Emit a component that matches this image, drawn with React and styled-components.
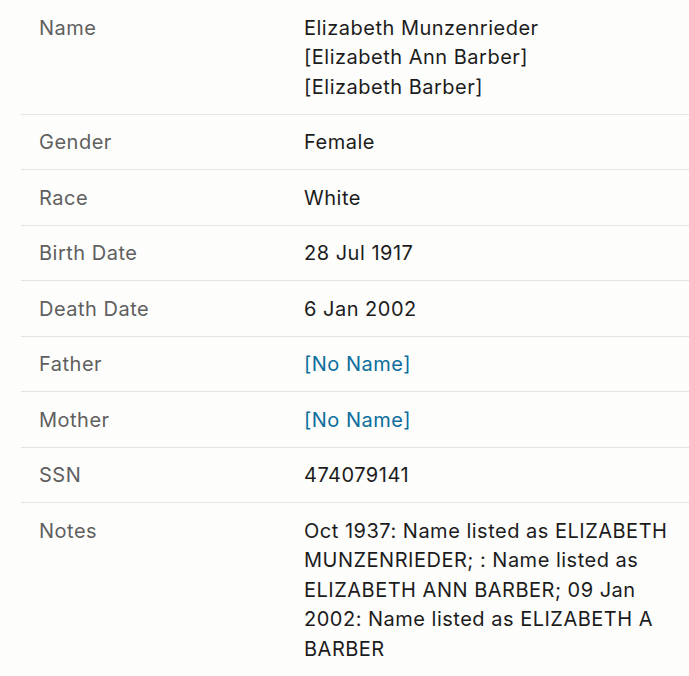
import React from 'react';
import styled, { createGlobalStyle } from 'styled-components';

const GlobalStyle = createGlobalStyle`
  html, body {
    margin: 0;
    padding: 0;
    background: #fdfdfc;
  }
  body {
    font-family: Inter, "Liberation Sans", Arial, sans-serif;
    -webkit-font-smoothing: antialiased;
  }
`;

const Page = styled.div`
  padding-left: 21px;
  width: 668px;
`;

const FactTable = styled.table`
  width: 100%;
  border-collapse: collapse;
  table-layout: fixed;
  font-size: 20px;
  line-height: 29.5px;
  letter-spacing: 0.5px;

  th, td {
    padding: 13.5px 0 11.5px 18px;
    vertical-align: top;
    text-align: left;
    font-weight: 400;
  }
  tr {
    border-bottom: 1px solid #e4e4e2;
  }
  tr:last-child {
    border-bottom: none;
  }
`;

const Label = styled.th`
  width: 265px;
  color: #5f5f5f;
`;

const Value = styled.td`
  color: #1c1c1c;
  padding-left: 0 !important;
  padding-right: 8px !important;
`;

const Link = styled.a`
  color: #0c6e9c;
  text-decoration: none;
  cursor: pointer;
`;

const Line = styled.div``;

const facts = [
  { label: 'Name', lines: ['Elizabeth Munzenrieder', '[Elizabeth Ann Barber]', '[Elizabeth Barber]'] },
  { label: 'Gender', lines: ['Female'] },
  { label: 'Race', lines: ['White'] },
  { label: 'Birth Date', lines: ['28 Jul 1917'] },
  { label: 'Death Date', lines: ['6 Jan 2002'] },
  { label: 'Father', link: '[No Name]' },
  { label: 'Mother', link: '[No Name]' },
  { label: 'SSN', lines: ['474079141'] },
  {
    label: 'Notes',
    lines: ['Oct 1937: Name listed as ELIZABETH MUNZENRIEDER; : Name listed as ELIZABETH ANN BARBER; 09 Jan 2002: Name listed as ELIZABETH A BARBER'],
  },
];

export default function App() {
  return (
    <>
      <GlobalStyle />
      <Page>
        <FactTable>
          <tbody>
            {facts.map((f) => (
              <tr key={f.label}>
                <Label scope="row">{f.label}</Label>
                <Value>
                  {f.link
                    ? <Link>{f.link}</Link>
                    : f.lines.map((l) => <Line key={l}>{l}</Line>)}
                </Value>
              </tr>
            ))}
          </tbody>
        </FactTable>
      </Page>
    </>
  );
}
